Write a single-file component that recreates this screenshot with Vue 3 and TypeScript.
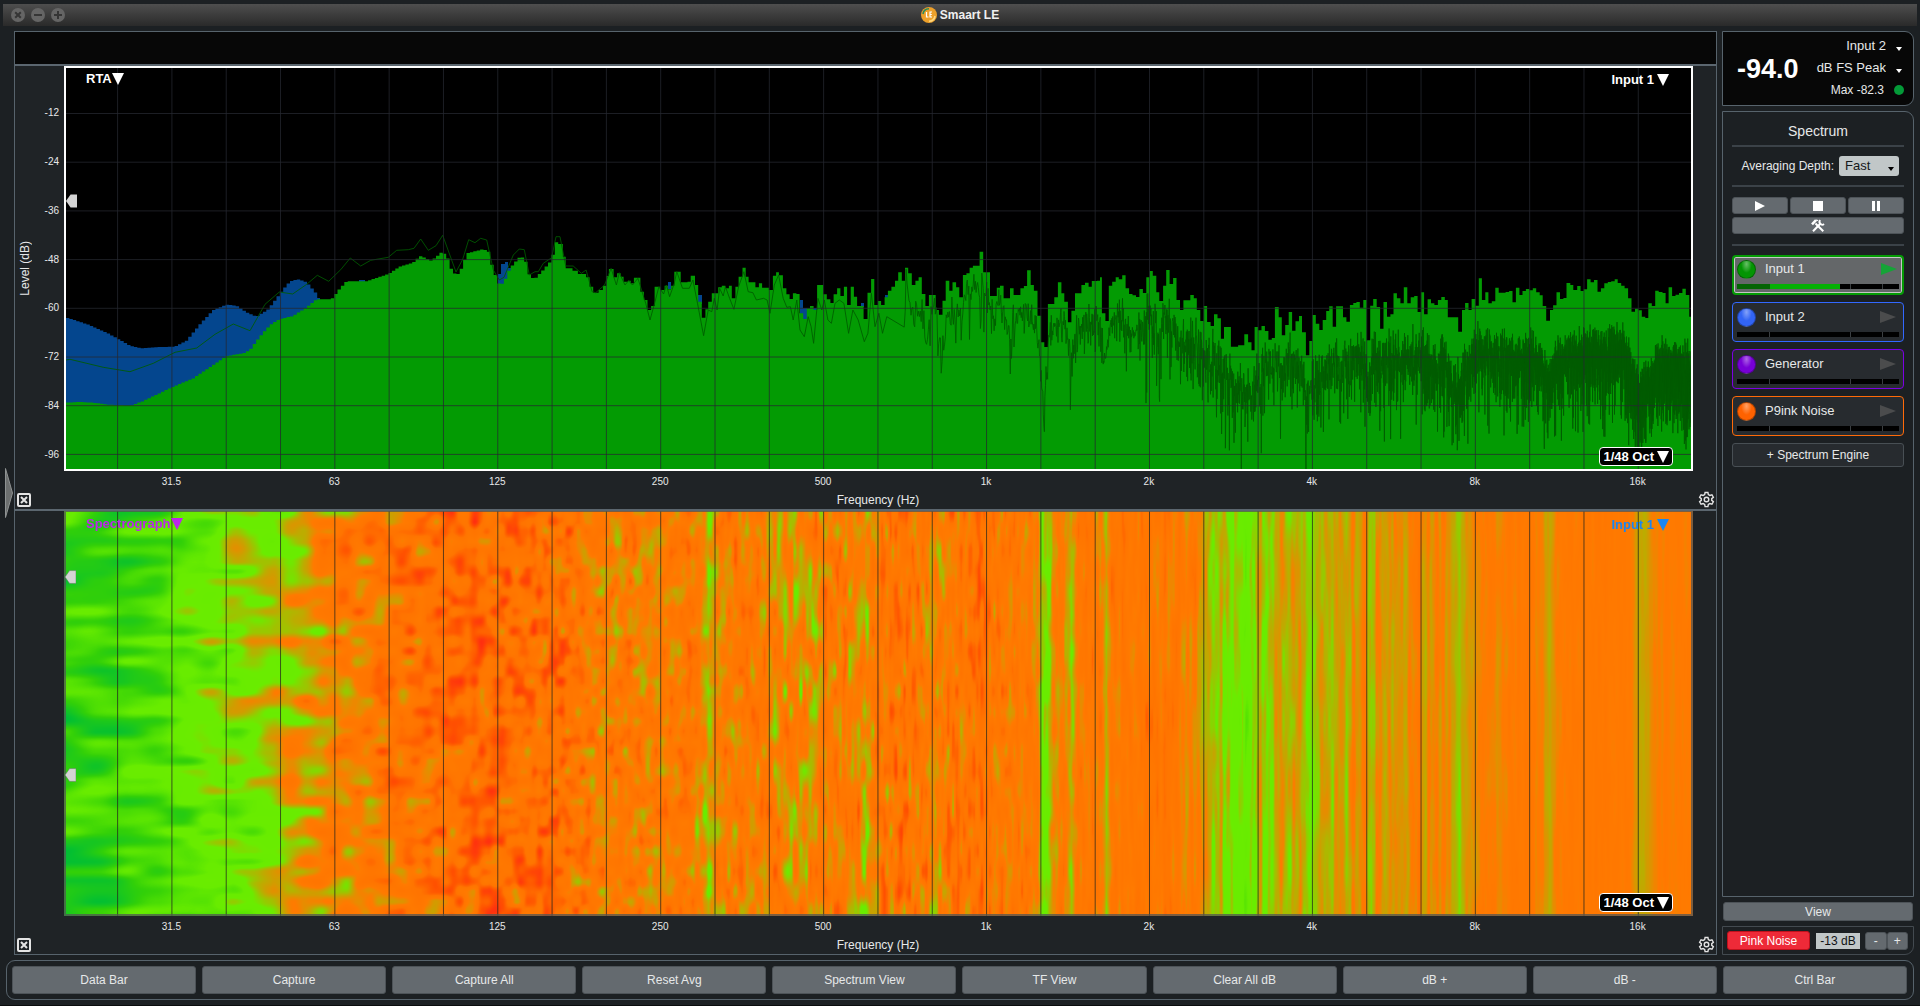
<script setup lang="ts">
import { onMounted, ref } from 'vue'

type Point = [number, number]

interface Engine {
  name: string
  color: string
  ball: string
  active: boolean
}

const engines: Engine[] = [
  { name: 'Input 1', color: '#049b04', ball: '#039503', active: true },
  { name: 'Input 2', color: '#3268ff', ball: '#3264f4', active: false },
  { name: 'Generator', color: '#7c00e4', ball: '#7700d6', active: false },
  { name: 'P9ink Noise', color: '#ff6a08', ball: '#ff6200', active: false },
]

const commands = ['Data Bar', 'Capture', 'Capture All', 'Reset Avg', 'Spectrum View', 'TF View', 'Clear All dB', 'dB +', 'dB -', 'Ctrl Bar']
const freqLabels = ['31.5', '63', '125', '250', '500', '1k', '2k', '4k', '8k', '16k']
const levelLabels = ['-12', '-24', '-36', '-48', '-60', '-72', '-84', '-96']

/* Plot space: 1625 x 401 units, one octave every 163 units, 12 dB every 48.7 units. */
const W = 1625
const H = 401
const OCTAVE = 162.93
const gridX = Array.from({ length: 29 }, (_, i) => 51.6 + i * OCTAVE / 3)
const gridY = Array.from({ length: 8 }, (_, i) => 45.5 + i * 48.7)

/* Each trace is stored in blocks; a block has its own origin and scale. */
const unpack = (flat: number[], ox: number, sx: number): Point[] => {
  const out: Point[] = []
  for (let i = 0; i < flat.length; i += 2) out.push([ox + flat[i] / sx, 152 + flat[i + 1] / 3])
  return out
}

const lerpAt = (pts: Point[], x: number): number => {
  if (x <= pts[0][0]) return pts[0][1]
  for (let i = 1; i < pts.length; i++) {
    if (x <= pts[i][0]) {
      const [x0, y0] = pts[i - 1]
      const [x1, y1] = pts[i]
      return y0 + (y1 - y0) * (x - x0) / (x1 - x0 || 1)
    }
  }
  return pts[pts.length - 1][1]
}

const lowBand = unpack([18, 548, 60, 546, 100, 548, 145, 554, 215, 556, 250, 543, 336, 502, 400, 475, 460, 435, 500, 408, 550, 400, 570, 390, 600, 350, 630, 315, 660, 297, 700, 288, 740, 262, 770, 238, 815, 238, 835, 212, 860, 184, 920, 184, 985, 162, 1020, 140, 1060, 128, 1080, 108, 1115, 122, 1145, 97, 1160, 105, 1175, 150, 1190, 168, 1205, 145, 1222, 100, 1268, 88, 1285, 92, 1300, 150, 1320, 200, 1335, 180, 1350, 145, 1380, 110, 1395, 115, 1410, 170, 1425, 177, 1450, 150, 1475, 120, 1490, 65, 1500, 72, 1515, 130], -6, 3)

const midBand = unpack([0, 72, 8, 110, 16, 145, 35, 152, 50, 162, 73, 172, 83, 200, 93, 218, 108, 210, 120, 197, 130, 168, 137, 147, 150, 172, 160, 160, 170, 170, 178, 185, 190, 182, 198, 190, 207, 173, 225, 215, 235, 240, 245, 270, 255, 258, 265, 200, 281, 210, 293, 197, 302, 208, 311, 197, 320, 155, 338, 187, 357, 185, 366, 167, 378, 195, 387, 245, 397, 293, 407, 268, 415, 245, 425, 220, 443, 202, 453, 197, 463, 205, 473, 197, 481, 235, 491, 200, 500, 170, 511, 143, 520, 170, 528, 187, 547, 202, 557, 190, 566, 203, 585, 210, 596, 167, 605, 157, 613, 166, 624, 205, 634, 223, 643, 237, 652, 220, 662, 222, 671, 280, 681, 297, 691, 265, 700, 258, 710, 270, 720, 195, 737, 223, 747, 238, 757, 249, 766, 223, 776, 205, 785, 228, 795, 200, 804, 255, 814, 200, 823, 230, 832, 258, 850, 297, 861, 218, 871, 177, 880, 255, 890, 243, 899, 255, 909, 232, 918, 212, 928, 200, 938, 182, 947, 157, 957, 182, 966, 143, 975, 160, 985, 195, 995, 182, 1004, 172, 1013, 222, 1023, 258, 1033, 225, 1052, 270, 1061, 284, 1071, 242, 1080, 182, 1090, 212, 1099, 187, 1109, 202, 1118, 232, 1128, 165, 1138, 160, 1147, 143, 1156, 137, 1175, 95, 1185, 157, 1204, 228, 1223, 203, 1232, 197, 1242, 235, 1260, 205, 1270, 225, 1289, 205, 1299, 198, 1308, 151, 1318, 195, 1327, 212, 1337, 287, 1347, 367, 1356, 381, 1366, 252, 1384, 232, 1394, 187, 1404, 220, 1412, 245, 1422, 307, 1432, 272, 1442, 220, 1460, 195, 1470, 188, 1480, 200, 1489, 183], 494, 2.8)

const highBand = unpack([-8, 182, 0, 172, 5, 280, 14, 303, 23, 197, 32, 185, 41, 172, 49, 178, 58, 166, 67, 205, 76, 222, 85, 226, 94, 231, 103, 207, 112, 219, 121, 172, 130, 153, 138, 167, 147, 217, 155, 243, 165, 197, 173, 150, 182, 192, 191, 174, 200, 240, 209, 270, 218, 241, 236, 225, 245, 235, 253, 270, 262, 303, 271, 258, 280, 306, 289, 318, 298, 283, 307, 295, 316, 356, 324, 321, 342, 380, 361, 376, 377, 343, 387, 367, 396, 391, 404, 321, 413, 331, 422, 318, 431, 333, 440, 359, 449, 354, 457, 261, 467, 292, 475, 346, 484, 315, 493, 276, 502, 332, 511, 304, 520, 288, 528, 337, 538, 406, 547, 363, 555, 285, 564, 311, 573, 330, 582, 300, 591, 273, 599, 259, 608, 320, 617, 259, 635, 292, 644, 305, 653, 255, 662, 249, 670, 246, 679, 263, 688, 240, 697, 361, 706, 257, 714, 237, 723, 261, 732, 326, 741, 246, 750, 290, 759, 283, 767, 220, 776, 235, 785, 250, 794, 202, 803, 250, 812, 232, 821, 228, 830, 276, 839, 217, 847, 283, 856, 238, 865, 250, 874, 255, 883, 240, 892, 231, 901, 240, 909, 292, 936, 335, 946, 270, 954, 249, 963, 270, 971, 237, 981, 257, 990, 175, 998, 240, 1007, 217, 1015, 250, 1024, 244, 1033, 203, 1042, 218, 1060, 216, 1069, 213, 1078, 247, 1087, 203, 1096, 225, 1104, 213, 1113, 207, 1122, 211, 1131, 205, 1140, 217, 1149, 226, 1157, 258, 1166, 302, 1176, 270, 1184, 256, 1193, 217, 1202, 237, 1211, 234, 1219, 189, 1229, 195, 1237, 210, 1247, 198, 1256, 213, 1264, 208, 1273, 178, 1282, 187, 1291, 180, 1300, 215, 1309, 205, 1318, 190, 1327, 186, 1336, 184, 1345, 178, 1353, 189, 1362, 197, 1371, 205, 1380, 235, 1389, 275, 1398, 266, 1407, 271, 1416, 290, 1425, 294, 1433, 250, 1442, 258, 1451, 212, 1460, 216, 1470, 219, 1478, 250, 1486, 202, 1495, 228, 1504, 224, 1513, 219, 1522, 206, 1531, 225, 1540, 290], 1034, 2.6133)

const peakLow = unpack([18, 292, 80, 312, 140, 338, 175, 357, 210, 377, 245, 385, 300, 381, 345, 380, 380, 362, 420, 313, 460, 270, 500, 254, 530, 257, 560, 277, 590, 290, 625, 268, 665, 215, 690, 184, 715, 178, 740, 187, 765, 215, 780, 240], -6, 3)

const stepped = (pts: Point[], from: number, to: number): string => {
  const bar = OCTAVE / 48
  let d = `M${from} ${H}`
  for (let x = from; x < to; x += bar) {
    d += `V${lerpAt(pts, x + bar / 2).toFixed(1)}H${Math.min(x + bar, to).toFixed(1)}`
  }
  return `${d}V${H}Z`
}

const greenArea = (() => {
  let d = stepped(lowBand, 0, 494)
  d += `M494 ${H}`
  const steps = [...midBand, ...highBand]
  steps.forEach(([, y], i) => {
    const next = i + 1 < steps.length ? steps[i + 1][0] : W
    d += `V${y.toFixed(1)}H${next.toFixed(1)}`
  })
  return `${d}V${H}Z`
})()

const blueBlocks = [
  [293, 212, 6, 4], [432, 206, 3, 14], [435, 196, 4, 23], [439, 194, 3, 20], [442, 200, 3, 6],
  [602, 214, 3, 7], [632, 227, 4, 9], [734, 232, 3, 14], [737, 240, 4, 12], [747, 240, 4, 3], [795, 235, 3, 4], [819, 227, 3, 3],
]
const blueArea = stepped(peakLow, 0, 254)

/* Small repeatable generator so the traces look the same on each load. */
const makeRandom = (seed: number) => () => {
  seed = (seed + 0x6d2b79f5) | 0
  let t = Math.imul(seed ^ (seed >>> 15), 1 | seed)
  t = (t + Math.imul(t ^ (t >>> 7), 61 | t)) ^ t
  return ((t ^ (t >>> 14)) >>> 0) / 4294967296
}

const liveLow = unpack([18, 420, 30, 418, 130, 442, 210, 455, 280, 430, 345, 397, 410, 384, 465, 343, 520, 312, 570, 332, 615, 253, 658, 216, 698, 222, 740, 193, 772, 166, 806, 184, 842, 149, 871, 114, 902, 138, 932, 121, 985, 112, 1010, 91, 1045, 89, 1062, 85, 1082, 57, 1105, 91, 1128, 77, 1148, 46, 1188, 156, 1208, 118, 1226, 59, 1245, 68, 1262, 55, 1280, 60, 1300, 150, 1318, 180, 1332, 172, 1360, 105, 1378, 87, 1393, 89, 1408, 165, 1425, 155, 1435, 155, 1450, 130, 1475, 113, 1488, 50, 1500, 50], -6, 3)

const liveMid = unpack([16, 138, 37, 138, 60, 160, 73, 150, 90, 215, 100, 218, 125, 195, 143, 145, 158, 195, 166, 158, 182, 195, 192, 182, 203, 195, 218, 175, 240, 250, 252, 300, 265, 250, 277, 200, 290, 222, 298, 195, 307, 230, 320, 190, 327, 155, 343, 205, 362, 205, 372, 180, 385, 250, 402, 347, 415, 270, 425, 275, 432, 235, 440, 270, 447, 205, 457, 228, 463, 200, 475, 235, 487, 268, 500, 200, 515, 155, 527, 215, 540, 218, 550, 240, 570, 235, 580, 240, 588, 280, 600, 195, 612, 165, 625, 235, 635, 262, 645, 260, 653, 300, 663, 240, 672, 330, 684, 350, 695, 290, 703, 320, 710, 370, 722, 235, 733, 270, 740, 240, 750, 300, 760, 310, 770, 250, 782, 240, 795, 250, 808, 340, 820, 270, 835, 300, 852, 365, 862, 340, 872, 220, 882, 320, 893, 280, 903, 340, 915, 290], 494, 2.8)

const liveHigh = [
  ...unpack([920, 280, 930, 260, 950, 210, 970, 200, 990, 290, 1000, 250, 1030, 340, 1045, 270, 1060, 330, 1075, 380, 1090, 260, 1125, 310, 1140, 230, 1180, 200, 1210, 300, 1230, 265, 1260, 320, 1300, 275, 1330, 320, 1345, 430, 1355, 600, 1365, 410, 1375, 340, 1410, 305, 1430, 430, 1450, 320, 1480, 310, 1505, 300], 494, 2.8),
  ...unpack([3, 330, 14, 450, 25, 320, 50, 290, 90, 360, 130, 290, 160, 350, 180, 290, 205, 400, 250, 360, 270, 430, 300, 430, 340, 490, 370, 530, 395, 520, 430, 460, 490, 440, 530, 450, 538, 600, 548, 520, 580, 460, 620, 440, 680, 400, 695, 440, 702, 540, 712, 430, 760, 420, 830, 420, 900, 440, 925, 500, 942, 520, 955, 450, 990, 400, 1050, 425, 1150, 420, 1170, 500, 1190, 450, 1220, 415, 1370, 405, 1390, 480, 1410, 530, 1440, 500, 1455, 450, 1480, 450, 1535, 460, 1543, 500], 1034, 2.6133),
]

const liveTrace = (() => {
  const rnd = makeRandom(7)
  const pts: string[] = [...liveLow, ...liveMid].map(([x, y]) => `${x.toFixed(1)} ${y.toFixed(1)}`)
  for (let f = 704; f < 20200; f += f < 3000 ? 2.93 : 4.4) {
    const x = 920.7 + OCTAVE * Math.log2(f / 1000)
    if (x > W) break
    const level = 10 * Math.log10(-Math.log(1 - rnd() * 0.999) + 0.004)
    const spread = x < 1080 ? 2.4 : 3.7
    pts.push(`${x.toFixed(1)} ${(lerpAt(liveHigh, x) - (level + 1.6) * spread).toFixed(1)}`)
  }
  return 'M' + pts.join('L')
})()

/* Spectrograph: mean level per frequency plus smooth random texture. */
const meanLevel: Point[] = [[66, 0.18], [117, 0.19], [160, 0.26], [200, 0.37], [230, 0.44], [270, 0.46], [290, 0.52], [310, 0.6], [340, 0.67], [390, 0.72], [430, 0.78], [500, 0.79], [540, 0.77], [570, 0.74], [605, 0.66], [625, 0.69], [650, 0.66], [690, 0.7], [702, 0.6], [708, 0.52], [716, 0.65], [740, 0.69], [765, 0.68], [790, 0.64], [812, 0.62], [830, 0.67], [858, 0.66], [865, 0.56], [872, 0.68], [895, 0.73], [920, 0.72], [930, 0.64], [942, 0.67], [955, 0.72], [980, 0.78], [990, 0.7], [1037, 0.69], [1041, 0.47], [1047, 0.47], [1053, 0.65], [1063, 0.69], [1071, 0.52], [1078, 0.68], [1101, 0.7], [1106, 0.54], [1111, 0.7], [1150, 0.72], [1178, 0.7], [1186, 0.61], [1195, 0.67], [1200, 0.61], [1210, 0.57], [1220, 0.51], [1230, 0.46], [1240, 0.42], [1254, 0.46], [1260, 0.53], [1270, 0.48], [1280, 0.57], [1290, 0.52], [1300, 0.58], [1306, 0.46], [1311, 0.46], [1320, 0.57], [1327, 0.55], [1335, 0.53], [1340, 0.62], [1346, 0.52], [1352, 0.64], [1358, 0.59], [1365, 0.66], [1371, 0.5], [1376, 0.65], [1382, 0.55], [1390, 0.6], [1400, 0.58], [1410, 0.65], [1420, 0.66], [1425, 0.59], [1435, 0.63], [1445, 0.64], [1452, 0.59], [1459, 0.49], [1466, 0.63], [1476, 0.62], [1480, 0.66], [1530, 0.68], [1543, 0.64], [1549, 0.56], [1556, 0.66], [1580, 0.69], [1625, 0.68], [1634, 0.63], [1639, 0.57], [1648, 0.58], [1656, 0.66], [1691, 0.66]]

const stops: [number, number, number, number][] = [
  [0, 0, 190, 52], [0.2, 50, 208, 8], [0.36, 104, 236, 0], [0.45, 106, 236, 0],
  [0.56, 190, 170, 0], [0.66, 255, 122, 0], [0.76, 255, 116, 0], [0.88, 255, 82, 0], [1, 255, 45, 16],
]

const colorRamp = (() => {
  const table = new Uint8Array(256 * 3)
  for (let i = 0; i < 256; i++) {
    const v = i / 255
    let k = 1
    while (k < stops.length - 1 && v > stops[k][0]) k++
    const a = stops[k - 1]
    const b = stops[k]
    const t = (v - a[0]) / (b[0] - a[0])
    for (let c = 0; c < 3; c++) table[i * 3 + c] = Math.round(a[c + 1] + (b[c + 1] - a[c + 1]) * t)
  }
  return table
})()

const hash = (x: number, y: number, s: number): number => {
  let h = Math.imul(x, 374761393) + Math.imul(y, 668265263) + Math.imul(s, 1274126177)
  h = Math.imul(h ^ (h >>> 13), 1103515245)
  return ((h ^ (h >>> 16)) >>> 0) / 4294967296
}

const smoothNoise = (u: number, v: number, s: number): number => {
  const x = Math.floor(u)
  const y = Math.floor(v)
  const fx = u - x
  const fy = v - y
  const a = fx * fx * (3 - 2 * fx)
  const b = fy * fy * (3 - 2 * fy)
  const top = hash(x, y, s) * (1 - a) + hash(x + 1, y, s) * a
  const low = hash(x, y + 1, s) * (1 - a) + hash(x + 1, y + 1, s) * a
  return (top * (1 - b) + low * b) * 2 - 1
}

const cellWidth: Point[] = [[66, 60], [240, 36], [330, 22], [450, 13], [600, 8], [800, 5], [1000, 4], [1700, 3]]
const texture: Point[] = [[66, 0.16], [250, 0.14], [310, 0.14], [400, 0.15], [620, 0.16], [800, 0.15], [950, 0.13], [1150, 0.1], [1300, 0.07], [1450, 0.04], [1691, 0.015]]
const columnTexture: Point[] = [[950, 0], [1150, 0.04], [1220, 0.07], [1380, 0.07], [1480, 0.04], [1600, 0.02], [1691, 0.02]]

const canvas = ref<HTMLCanvasElement | null>(null)

onMounted(() => {
  const el = canvas.value
  const ctx = el?.getContext('2d')
  if (!el || !ctx) return
  const w = el.width
  const h = el.height
  const img = ctx.createImageData(w, h)
  let u = 0
  for (let px = 0; px < w; px++) {
    const x = px + 64
    u += 1 / lerpAt(cellWidth, x)
    const mean = lerpAt(meanLevel, x) + smoothNoise(x / 3, 0.5, 9) * lerpAt(columnTexture, x)
    const amp = lerpAt(texture, x)
    const right = Math.min(1, Math.max(0, (x - 540) / 260))
    const far = Math.min(1, Math.max(0, (x - 950) / 250))
    for (let y = 0; y < h; y++) {
      const short = smoothNoise(u + y * 0.006, y / 10, 1) + 0.6 * smoothNoise(u * 1.7, y / 17 + 40, 2)
      const tall = smoothNoise(u, y / 20, 3) + 0.6 * smoothNoise(u * 1.6, y / 36, 4)
      const streak = smoothNoise(u, y / 70, 5) + 0.5 * smoothNoise(u * 1.4, y / 30, 6)
      let n = short * (1 - right) + tall * right
      n = n * (1 - far) + streak * far
      const v = Math.min(1, Math.max(0, mean + n * amp))
      const c = Math.round(v * 255) * 3
      const o = (y * w + px) * 4
      img.data[o] = colorRamp[c]
      img.data[o + 1] = colorRamp[c + 1]
      img.data[o + 2] = colorRamp[c + 2]
      img.data[o + 3] = 255
    }
  }
  ctx.putImageData(img, 0, 0)
})
</script>

<template>
  <div class="window">
    <header class="titlebar">
      <div class="lights">
        <button type="button" aria-label="Close"><svg viewBox="0 0 14 14"><path d="M4.200 4.200l5.600 5.600M9.800 4.200l-5.600 5.600" /></svg></button>
        <button type="button" aria-label="Minimize"><svg viewBox="0 0 14 14"><path d="M3 7h8" /></svg></button>
        <button type="button" aria-label="Zoom"><svg viewBox="0 0 14 14"><path d="M3 7h8M7 3v8" /></svg></button>
      </div>
      <div class="title">
        <svg class="logo" viewBox="0 0 16 16">
          <circle cx="8" cy="8" r="8" fill="#eda02a" />
          <path d="M2 7A6.200 6.200 0 0 1 8 1.800" fill="none" stroke="#2b8a5a" stroke-width="1.600" />
          <path d="M14 9A6.200 6.200 0 0 1 8 14.200" fill="none" stroke="#ffd67c" stroke-width="1.600" />
          <path d="M5.500 5v5h2M11 5H9v5h2M9 7.500h1.800" fill="none" stroke="#fff" stroke-width="1.200" />
        </svg>
        <span>Smaart LE</span>
      </div>
    </header>

    <div class="body">
      <button class="drawer" type="button" aria-label="Open data bar">
        <svg viewBox="0 0 8 50"><path d="M0.500 0.500L7.500 25L0.500 49.500Z" fill="#6c6f6f" stroke="#8e9292" /></svg>
      </button>

      <main class="graphs">
        <div class="legend"></div>

        <section class="graph">
          <div class="plot-row">
            <div class="y-axis">
              <div class="y-title"><span>Level (dB)</span></div>
              <div class="y-ticks"><span v-for="l in levelLabels" :key="l">{{ l }}</span></div>
            </div>
            <div class="plot rta">
              <svg class="fill" :viewBox="`0 0 ${W} ${H}`" preserveAspectRatio="none">
                <path :d="blueArea" fill="#04468e" />
                <rect v-for="(b, i) in blueBlocks" :key="i" :x="b[0]" :y="b[1]" :width="b[2]" :height="b[3]" fill="#04468e" />
                <path :d="greenArea" fill="#039b03" />
                <path :d="liveTrace" fill="none" stroke="#005c00" stroke-width="1" stroke-opacity="0.850" />
                <g stroke="#262830" stroke-opacity="0.750" stroke-width="1">
                  <line v-for="x in gridX" :key="x" :x1="x" :x2="x" y1="0" :y2="H" />
                  <line v-for="y in gridY" :key="y" x1="0" :x2="W" :y1="y" :y2="y" />
                </g>
              </svg>
              <svg class="marker first" viewBox="0 0 12 14"><path d="M0 7L5 0H12V14H5Z" fill="#d4d4d4" /></svg>
              <button class="tag left" type="button">RTA<svg viewBox="0 0 12 12"><path d="M0 0H12L6 12Z" /></svg></button>
              <button class="tag right" type="button">Input 1<svg class="spaced" viewBox="0 0 12 12"><path d="M0 0H12L6 12Z" /></svg></button>
              <button class="octave" type="button">1/48 Oct<svg viewBox="0 0 12 12"><path d="M0 0H12L6 12Z" /></svg></button>
            </div>
          </div>
          <div class="x-ticks"><span v-for="f in freqLabels" :key="f">{{ f }}</span></div>
          <div class="foot">
            <button class="close" type="button" aria-label="Close graph"><svg viewBox="0 0 14 14"><rect x="1" y="1" width="12" height="12" rx="1" /><path d="M4 4l6 6M10 4l-6 6" /></svg></button>
            <span>Frequency (Hz)</span>
            <button class="gear" type="button" aria-label="Graph settings"><svg viewBox="0 0 24 24"><path d="M10 2h4l.6 3 2.200 1.300 2.900-1 2 3.500-2.300 2v2.400l2.300 2-2 3.500-2.900-1-2.200 1.300-.6 3h-4l-.6-3-2.200-1.300-2.900 1-2-3.500 2.300-2v-2.400l-2.300-2 2-3.500 2.900 1L9.400 5z" /><circle cx="12" cy="12" r="3.200" /></svg></button>
          </div>
        </section>

        <section class="graph">
          <div class="plot-row">
            <div class="y-axis"></div>
            <div class="plot spectro">
              <canvas ref="canvas" class="fill" width="1629" height="405"></canvas>
              <svg class="fill" :viewBox="`-2 0 ${W + 4} ${H}`" preserveAspectRatio="none">
                <line v-for="x in gridX" :key="x" :x1="x" :x2="x" y1="0" :y2="H" stroke="#26261e" stroke-opacity="0.750" />
              </svg>
              <div class="rim"></div>
              <svg class="marker second" viewBox="0 0 12 14"><path d="M0 7L5 0H12V14H5Z" fill="#d4d4d4" stroke="#4f6e4f" stroke-width="0.500" /></svg>
              <svg class="marker third" viewBox="0 0 12 14"><path d="M0 7L5 0H12V14H5Z" fill="#d4d4d4" stroke="#4f6e4f" stroke-width="0.500" /></svg>
              <button class="tag left violet" type="button">Spectrograph<svg viewBox="0 0 12 12"><path d="M0 0H12L6 12Z" /></svg></button>
              <button class="tag right azure" type="button">Input 1<svg class="spaced" viewBox="0 0 12 12"><path d="M0 0H12L6 12Z" /></svg></button>
              <button class="octave" type="button">1/48 Oct<svg viewBox="0 0 12 12"><path d="M0 0H12L6 12Z" /></svg></button>
            </div>
          </div>
          <div class="x-ticks"><span v-for="f in freqLabels" :key="f">{{ f }}</span></div>
          <div class="foot">
            <button class="close" type="button" aria-label="Close graph"><svg viewBox="0 0 14 14"><rect x="1" y="1" width="12" height="12" rx="1" /><path d="M4 4l6 6M10 4l-6 6" /></svg></button>
            <span>Frequency (Hz)</span>
            <button class="gear" type="button" aria-label="Graph settings"><svg viewBox="0 0 24 24"><path d="M10 2h4l.6 3 2.200 1.300 2.900-1 2 3.500-2.300 2v2.400l2.300 2-2 3.500-2.900-1-2.200 1.300-.6 3h-4l-.6-3-2.200-1.300-2.900 1-2-3.500 2.300-2v-2.400l-2.300-2 2-3.500 2.900 1L9.400 5z" /><circle cx="12" cy="12" r="3.200" /></svg></button>
          </div>
        </section>
      </main>

      <aside class="side">
        <section class="meter-box">
          <strong>-94.0</strong>
          <div class="meter-info">
            <div class="pick">
              <select aria-label="Meter input"><option>Input 2</option></select>
              <svg viewBox="0 0 6 4"><path d="M0 0H6L3 4Z" /></svg>
            </div>
            <div class="pick">
              <select aria-label="Meter scale"><option>dB FS Peak</option></select>
              <svg viewBox="0 0 6 4"><path d="M0 0H6L3 4Z" /></svg>
            </div>
            <div class="max"><span>Max -82.3</span><i></i></div>
          </div>
        </section>

        <section class="spectrum">
          <h2>Spectrum</h2>
          <hr />
          <div class="avg">
            <label for="depth">Averaging Depth:</label>
            <div class="depth">
              <select id="depth"><option>Fast</option></select>
              <svg viewBox="0 0 6 4"><path d="M0 0H6L3 4Z" /></svg>
            </div>
          </div>
          <hr />
          <div class="transport">
            <button type="button" aria-label="Play"><svg viewBox="0 0 10 10"><path d="M0 0L10 5L0 10Z" /></svg></button>
            <button type="button" aria-label="Stop"><svg viewBox="0 0 10 10"><path d="M0 0H10V10H0Z" /></svg></button>
            <button type="button" aria-label="Pause"><svg viewBox="0 0 10 10"><path d="M1 0H4V10H1ZM6 0H9V10H6Z" /></svg></button>
          </div>
          <button class="tools" type="button" aria-label="Measurement settings">
            <svg viewBox="0 0 14 14">
              <path d="M4.500 4.500L12.300 12.300" stroke-width="2" /><path d="M1 5.300L5 1.200" stroke-width="2.600" /><path d="M5 1.200l2.200 0.300" stroke-width="1.200" />
              <path d="M10 4L2 12.300" stroke-width="2" /><path d="M9.300 1.200A2.600 2.600 0 1 0 13 5" stroke-width="1.800" />
            </svg>
          </button>
          <hr />
          <ul class="engines">
            <li v-for="e in engines" :key="e.name" :class="{ active: e.active }" :style="{ borderColor: e.color }">
              <div class="engine-main">
                <i class="ball" :style="{ backgroundColor: e.ball }"></i>
                <span>{{ e.name }}</span>
                <button type="button" :aria-label="`Run ${e.name}`"><svg viewBox="0 0 16 12"><path d="M0 0L16 6L0 12Z" /></svg></button>
              </div>
              <div class="level"><b></b><b></b><b></b><b></b></div>
            </li>
          </ul>
          <button class="add" type="button">+ Spectrum Engine</button>
        </section>

        <button class="view" type="button">View</button>

        <section class="generator">
          <button class="pink" type="button">Pink Noise</button>
          <input type="text" value="-13 dB" aria-label="Generator level" readonly />
          <div class="steppers">
            <button type="button">-</button>
            <button type="button">+</button>
          </div>
        </section>
      </aside>
    </div>

    <nav class="commands">
      <button v-for="c in commands" :key="c" type="button">{{ c }}</button>
    </nav>
  </div>
</template>

<style>
body {
  margin: 0;
  background: #1c2023;
}
</style>

<style scoped>
* {
  box-sizing: border-box;
}

button,
select,
input {
  font: inherit;
  color: inherit;
  margin: 0;
  padding: 0;
  border: 0;
  background: none;
}

svg {
  display: block;
  flex: none;
}

.window {
  display: flex;
  flex-direction: column;
  min-height: 100vh;
  padding: 4px 3px 5px;
  border-bottom: 1px solid #0a0c0d;
  background: #1c2023;
  color: #e6e8e9;
  font: 12px/16px "Liberation Sans", Arial, sans-serif;
}

.titlebar {
  display: flex;
  align-items: center;
  justify-content: center;
  position: relative;
  height: 22px;
  background: linear-gradient(#4e4e4e, #2a2a2a);
}

.lights {
  position: absolute;
  left: 8px;
  top: 4px;
  display: flex;
  gap: 6px;
}

.lights button {
  width: 14px;
  height: 14px;
  border-radius: 50%;
  background: #656565;
}

.lights path {
  fill: none;
  stroke: #353535;
  stroke-width: 2;
}

.title {
  display: flex;
  align-items: center;
  gap: 3px;
  font-weight: bold;
  color: #f0f0f0;
}

.logo {
  width: 16px;
  height: 16px;
}

.body {
  flex: 1;
  display: flex;
  margin: 5px 3px 0 0;
}

.drawer {
  width: 11px;
  display: flex;
  align-items: center;
  padding-left: 2px;
}

.drawer svg {
  width: 8px;
  height: 50px;
}

.graphs {
  flex: 1;
  min-width: 0;
  display: flex;
  flex-direction: column;
  border: 1px solid #57636c;
  background: #1f2326;
}

.legend {
  height: 32px;
  background: #070707;
}

.graph {
  flex: 1;
  display: flex;
  flex-direction: column;
  border-top: 2px solid #5b666f;
  overflow: hidden;
}

.plot-row {
  flex: 1;
  display: flex;
  padding-right: 23px;
}

.y-axis {
  display: flex;
  width: 49px;
}

.y-title {
  width: 20px;
  display: flex;
  align-items: center;
  justify-content: center;
}

.y-title span {
  writing-mode: vertical-rl;
  transform: rotate(180deg);
}

.y-ticks {
  flex: 1;
  display: flex;
  flex-direction: column;
  padding: 23px 5px 0 0;
  margin-bottom: -8px;
  font-size: 10px;
  text-align: right;
}

.y-ticks span {
  flex: 1;
  display: flex;
  align-items: center;
  justify-content: flex-end;
}

.plot {
  flex: 1;
  position: relative;
  min-width: 0;
}

.rta {
  border: 2px solid #fff;
  background: #000;
}

.fill {
  position: absolute;
  inset: 0;
  width: 100%;
  height: 100%;
}

.rim {
  position: absolute;
  inset: 0;
  border: 2px solid rgba(80, 84, 84, 0.75);
  border-top-width: 1px;
}

.marker {
  position: absolute;
  left: 0;
  width: 11px;
  height: 14px;
}

.first {
  top: 126px;
}

.second {
  left: 1px;
  top: 59px;
}

.third {
  left: 1px;
  top: 257px;
}

.tag,
.octave {
  position: absolute;
  display: flex;
  align-items: center;
  color: #fff;
  font-size: 13px;
  font-weight: bold;
  line-height: 16px;
}

.tag svg,
.octave svg {
  width: 12px;
  height: 12px;
  fill: currentColor;
}

.tag .spaced {
  margin-left: 3px;
}

.left {
  left: 20px;
  top: 3px;
}

.right {
  right: 22px;
  top: 4px;
}

.violet {
  color: #bb28e8;
}

.azure {
  color: #1a86f0;
}

.octave {
  right: 18px;
  bottom: 3px;
  gap: 3px;
  height: 19px;
  padding: 0 3px;
  border: 1px solid #fff;
  border-radius: 4px;
  background: #000;
}

.spectro .left {
  left: 22px;
  top: 5px;
}

.spectro .right {
  right: 24px;
  top: 6px;
}

.spectro .octave {
  right: 20px;
  bottom: 4px;
}

.x-ticks {
  display: flex;
  height: 20px;
  padding: 1px 0 0 75px;
  margin-right: -3px;
  font-size: 10px;
  line-height: 20px;
  text-align: center;
}

.x-ticks span {
  flex: 1;
}

.foot {
  display: flex;
  align-items: center;
  justify-content: space-between;
  height: 18px;
  padding: 0 1px 1px 2px;
}

.foot span {
  padding-left: 27px;
}

.close svg {
  width: 14px;
  height: 14px;
}

.close svg,
.gear svg {
  fill: none;
  stroke: #e4e4e4;
  stroke-width: 2;
}

.gear svg {
  width: 17px;
  height: 17px;
}

.side {
  display: flex;
  flex-direction: column;
  width: 192px;
  margin-left: 5px;
}

.meter-box,
.spectrum,
.generator {
  border: 1px solid #57636c;
}

.meter-box {
  display: flex;
  justify-content: space-between;
  height: 75px;
  padding: 3px 9px 0 14px;
  border-radius: 0 9px 9px 0;
  background: #070707;
}

.meter-box strong {
  font-size: 27px;
  line-height: 68px;
  color: #fff;
}

.meter-info {
  display: flex;
  flex-direction: column;
  width: 90px;
}

.pick {
  position: relative;
  height: 22px;
}

.pick select,
.depth select {
  appearance: none;
  width: 100%;
  font-size: 13px;
}

.pick select {
  height: 22px;
  padding-right: 18px;
  text-align-last: right;
}

.pick option {
  background: #070707;
}

.pick svg {
  position: absolute;
  right: 2px;
  top: 12px;
  width: 6px;
  height: 4px;
  fill: #fff;
}

.max {
  display: flex;
  align-items: center;
  justify-content: flex-end;
  gap: 10px;
  height: 22px;
}

.max i {
  width: 10px;
  height: 10px;
  border-radius: 50%;
  background: #049a38;
}

.spectrum {
  flex: 1;
  display: flex;
  flex-direction: column;
  margin-top: 5px;
  padding: 9px 9px 10px;
  border-radius: 0 9px 0 0;
}

h2 {
  margin: 0 0 1px;
  font-size: 14px;
  font-weight: normal;
  line-height: 20px;
  text-align: center;
}

hr {
  width: 100%;
  height: 2px;
  margin: 3px 0 0;
  border: 0;
  background: #3b4248;
}

.avg {
  display: flex;
  align-items: center;
  justify-content: flex-end;
  gap: 5px;
  padding: 9px 5px 6px 0;
}

.depth {
  position: relative;
  width: 60px;
}

.depth select {
  display: block;
  height: 20px;
  padding-left: 6px;
  border-radius: 3px;
  background: #c1c7c8;
  color: #15181a;
}

.depth svg {
  position: absolute;
  right: 5px;
  top: 11px;
  width: 6px;
  height: 4px;
  fill: #000;
}

.transport {
  display: flex;
  gap: 2px;
  margin-top: 10px;
}

.transport button,
.tools,
.view,
.commands button,
.steppers button {
  display: flex;
  align-items: center;
  justify-content: center;
  border: 1px solid #4d5358;
  border-radius: 3px;
  background: #646a6f;
}

.transport button {
  flex: 1;
  height: 17px;
}

.transport svg {
  width: 10px;
  height: 10px;
  fill: #fff;
}

.tools {
  height: 17px;
  margin: 3px 0 7px;
}

.tools svg {
  width: 14px;
  height: 14px;
  fill: none;
  stroke: #fff;
}

.engines {
  display: flex;
  flex-direction: column;
  gap: 7px;
  margin: 9px 0 7px;
  padding: 0;
  list-style: none;
}

.engines li {
  height: 40px;
  padding: 4px;
  border: 1px solid;
  border-radius: 4px;
  background: #272b2f;
}

.engines .active {
  padding: 2px;
  border-width: 2px;
  background: #646769;
  box-shadow: inset 0 0 0 1px #c5c7c5;
}

.engine-main {
  display: flex;
  align-items: center;
  height: 20px;
  gap: 9px;
  font-size: 13px;
  margin-bottom: 5px;
}

.active .engine-main {
  padding-left: 1px;
}

.ball {
  width: 19px;
  height: 19px;
  border: 1px solid rgba(0, 0, 0, 0.3);
  border-radius: 50%;
  background-image: radial-gradient(ellipse at 50% 18%, rgba(255, 255, 255, 0.4), rgba(255, 255, 255, 0) 45%);
}

.engine-main span {
  flex: 1;
}

.engine-main button {
  margin-right: 3px;
}

.engine-main svg {
  width: 16px;
  height: 12px;
  fill: #4b4c4d;
}

.active svg {
  fill: #16a437;
}

.level {
  display: grid;
  grid-template-columns: 32fr 80fr 31fr 16fr;
  gap: 1px;
  height: 5px;
  background: #3a3e41;
}

.active .level {
  margin: 0 1px;
}

.level b {
  background: #000;
}

.active .level b:first-child {
  background: #046404;
  margin-right: -1px;
}

.active .level b:nth-child(2) {
  background: linear-gradient(90deg, #04b004 87%, #000 87%);
}

.add {
  height: 24px;
  border: 1px solid #484f54;
  border-radius: 3px;
  background: #272b2f;
}

.view {
  height: 19px;
  margin: 5px 1px;
}

.generator {
  display: flex;
  align-items: center;
  height: 29px;
  padding: 0 5px 0 4px;
  border-color: #434a50;
  border-radius: 0 0 9px 0;
}

.pink {
  width: 83px;
  height: 19px;
  border: 1px solid #c0101c;
  border-radius: 3px;
  background: #ee2a38;
  color: #fff;
}

.generator input {
  width: 44px;
  height: 16px;
  margin: 0 5px 0 6px;
  background: #c1c7c8;
  color: #101214;
  text-align: center;
}

.steppers {
  flex: 1;
  display: flex;
}

.steppers button {
  flex: 1;
  height: 18px;
}

.commands {
  display: flex;
  gap: 6px;
  height: 40px;
  margin: 5px 3px 0;
  padding: 5px 6px 5px 5px;
  border: 1px solid #57636c;
  border-radius: 9px;
}

.commands button {
  flex: 1;
}
</style>
